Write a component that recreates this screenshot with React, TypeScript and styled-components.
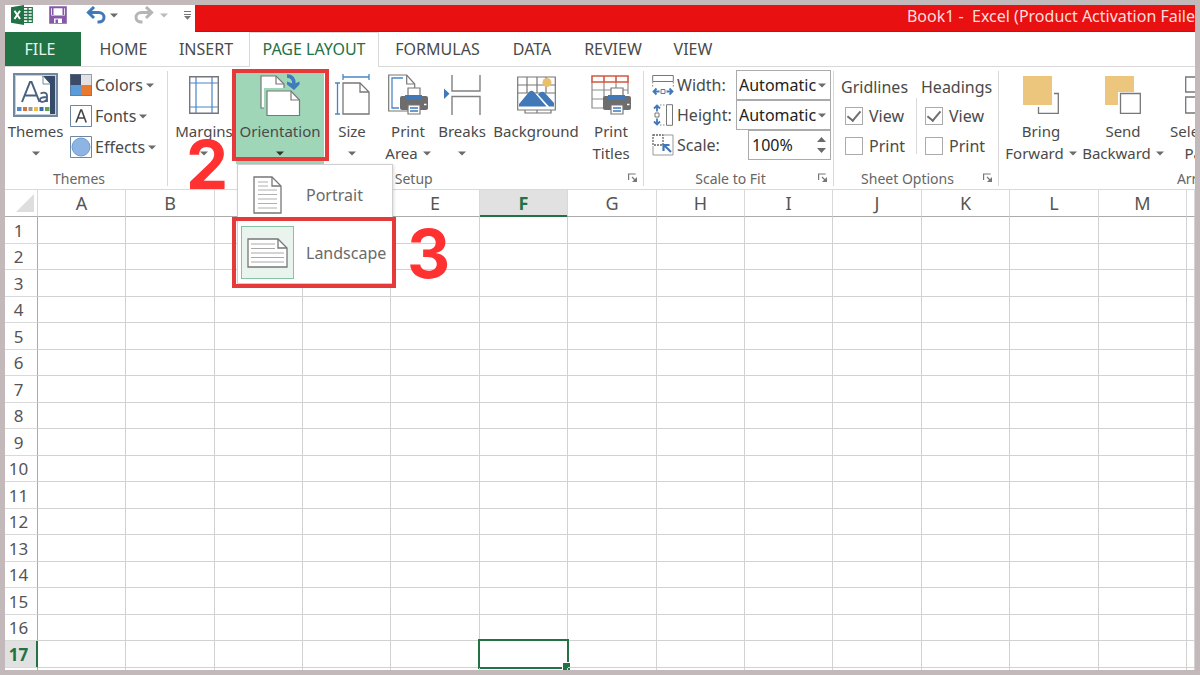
import React from "react";
import styled, { createGlobalStyle, css } from "styled-components";

const green = "#217346";
const ink = "#4a4a4a";
const line = "#d9d9d9";
const mark = "#e5393a";

const GlobalStyle = createGlobalStyle`
  * { box-sizing: border-box; }
  body { margin: 0; background: #c3b9bb; }
  body, button, input, select {
    font-family: "Noto Sans", "Open Sans", sans-serif;
    font-size: 16px;
    color: ${ink};
  }
  button { border: 0; background: none; padding: 0; }
  svg { display: block; flex: none; }
`;

const Frame = styled.main`
  height: 100vh;
  border: 5px solid #c3b9bb;
  background: #fff;
  overflow: hidden;
  display: flex;
  flex-direction: column;
`;

const TitleBar = styled.header`
  display: flex;
  height: 27px;
  flex: none;
`;

const QuickAccess = styled.div`
  display: flex;
  align-items: flex-start;
  width: 190px;
  padding-left: 6px;
`;

const QuickButton = styled.button<{ $w: number }>`
  width: ${(p) => p.$w}px;
  height: 20px;
  display: flex;
  align-items: center;
`;

const WindowTitle = styled.h1`
  flex: 1;
  margin: 0;
  background: #e81010;
  border-bottom: 1px solid #c01414;
  color: #ffdede;
  font-size: 16px;
  font-weight: 400;
  line-height: 23px;
  text-align: right;
  white-space: pre;
`;

const TabRow = styled.nav`
  display: flex;
  height: 35px;
  flex: none;
  border-bottom: 1px solid ${line};
`;

const FileTab = styled.button`
  width: 76px;
  height: 34px;
  margin-right: 3px;
  padding: 0 6px 1px 0;
  background: ${green};
  color: #e6f3ea;
`;

const Tab = styled.button<{ $w: number; $active?: boolean }>`
  width: ${(p) => p.$w}px;
  height: 35px;
  padding-bottom: 2px;
  white-space: nowrap;
  ${(p) =>
    p.$active &&
    css`
      color: ${green};
      background: #fff;
      border: 1px solid ${line};
      border-bottom: 0;
    `}
`;

const Ribbon = styled.section`
  display: flex;
  height: 123px;
  flex: none;
  border-bottom: 1px solid ${line};
  position: relative;
  z-index: 2;
`;

const Group = styled.div<{ $w: number; $pad?: number }>`
  width: ${(p) => p.$w}px;
  flex: none;
  display: flex;
  flex-direction: column;
  padding-top: 4px;
  padding-left: ${(p) => p.$pad ?? 0}px;
  background: linear-gradient(${line}, ${line}) right 4px / 1px 115px no-repeat;
`;

const GroupBody = styled.div`
  display: flex;
  height: 93px;
`;

const GroupFooter = styled.div`
  display: flex;
  align-items: center;
  height: 25px;
  padding: 3px 6px 0 0;
`;

const GroupName = styled.span`
  flex: 1;
  padding-right: 9px;
  text-align: center;
  font-size: 14px;
  color: #666;
`;

const Launcher = styled.button`
  width: 10px;
  height: 10px;
`;

const Tool = styled.button<{ $w: number; $on?: boolean }>`
  width: ${(p) => p.$w}px;
  height: 93px;
  flex: none;
  display: flex;
  flex-direction: column;
  align-items: center;
  font-size: 15px;
  background: ${(p) => (p.$on ? "#9fd6b7" : "transparent")};
`;

const ToolIcon = styled.span`
  height: 49px;
  padding-bottom: 2px;
  display: flex;
  align-items: center;
`;

const ToolLine = styled.span`
  height: 22px;
  display: flex;
  align-items: center;
  gap: 5px;
  line-height: 22px;
  white-space: nowrap;
`;

const SmallTools = styled.div`
  display: flex;
  flex-direction: column;
  gap: 9px;
  padding: 3px 0 0 4px;
`;

const SmallTool = styled.button`
  display: flex;
  align-items: center;
  gap: 3px;
  height: 22px;
`;

const OrientationArea = styled.div`
  position: relative;
`;

const Highlight = styled.div<{ $inset: string }>`
  position: absolute;
  inset: ${(p) => p.$inset};
  border: 4px solid ${mark};
  pointer-events: none;
`;

const Step = styled.span<{ $x: number; $y: number }>`
  position: absolute;
  left: ${(p) => p.$x}px;
  top: ${(p) => p.$y}px;
  font-family: Inter, sans-serif;
  font-size: 67px;
  line-height: 50px;
  font-weight: 700;
  color: #ff3131;
  pointer-events: none;
`;

const Menu = styled.div`
  position: absolute;
  left: 1px;
  top: 93px;
  width: 156px;
  height: 120px;
  padding: 3px 0 0 3px;
  background: #fff;
  border: 1px solid #cfcfcf;
  box-shadow: 1px 1px 3px rgba(0, 0, 0, 0.15);
`;

const MenuItem = styled.button`
  display: flex;
  align-items: center;
  gap: 12px;
  width: 100%;
  height: 53px;
  color: #6a6a6a;
  & + & { margin-top: 5px; }
`;

const MenuIcon = styled.span<{ $on?: boolean }>`
  width: 53px;
  height: 53px;
  display: flex;
  align-items: center;
  justify-content: center;
  border: 1px solid ${(p) => (p.$on ? "#86c3a1" : "transparent")};
  background: ${(p) => (p.$on ? "#e9f4ee" : "transparent")};
`;

const ScaleRows = styled.div`
  flex: 1;
  margin-top: -1px;
  padding-right: 3px;
`;

const ScaleRow = styled.div`
  display: flex;
  align-items: center;
  height: 30px;
`;

const ScaleLabel = styled.label`
  flex: 1;
  padding: 0 0 1px 3px;
`;

const Field = styled.div<{ $w: number }>`
  width: ${(p) => p.$w}px;
  height: 30px;
  display: flex;
  align-items: center;
  border: 1px solid #ababab;
  padding-right: 4px;
`;

const SelectBox = styled.select`
  appearance: none;
  flex: 1;
  min-width: 0;
  border: 0;
  padding: 0 0 1px 2px;
  background: none;
  color: #222;
`;

const PercentBox = styled.input`
  flex: 1;
  min-width: 0;
  border: 0;
  padding: 0 0 1px 3px;
  background: none;
  color: #222;
`;

const CheckColumn = styled.fieldset<{ $w: number; $rule?: boolean }>`
  width: ${(p) => p.$w}px;
  height: 80px;
  margin: 3px 0 0;
  padding: 0;
  border: 0;
  background: ${(p) =>
    p.$rule ? `linear-gradient(${line}, ${line}) right 4px top 10px / 1px 62px no-repeat` : "none"};
`;

const CheckTitle = styled.legend`
  padding: 0;
  height: 27px;
  line-height: 26px;
`;

const CheckLabel = styled.label`
  display: flex;
  align-items: center;
  gap: 6px;
  height: 30px;
  padding-left: 4px;
`;

const Check = styled.input`
  appearance: none;
  width: 18px;
  height: 18px;
  margin: 0;
  border: 1px solid #ababab;
  display: grid;
  place-items: center;
  &:checked::after {
    content: "";
    width: 6px;
    height: 11px;
    margin-top: -3px;
    border: solid #6e6e6e;
    border-width: 0 2px 2px 0;
    transform: rotate(40deg);
  }
`;

const SheetArea = styled.section`
  flex: 1;
  min-height: 0;
  overflow: hidden;
`;

const Sheet = styled.table`
  width: 100%;
  table-layout: fixed;
  border-collapse: separate;
  border-spacing: 0;
`;

const Corner = styled.th`
  height: 27px;
  padding: 0 3px 0 11px;
  border-right: 1px solid ${line};
  border-bottom: 1px solid #ababab;
`;

const ColHead = styled.th<{ $on?: boolean }>`
  height: 27px;
  padding: 0;
  font-size: 18px;
  font-weight: ${(p) => (p.$on ? 700 : 400)};
  line-height: 24px;
  color: ${(p) => (p.$on ? green : "#555")};
  background: ${(p) => (p.$on ? "#e1e1e1" : "#fff")};
  border-right: 1px solid ${line};
  border-bottom: 1px solid ${(p) => (p.$on ? green : "#ababab")};
  box-shadow: ${(p) => (p.$on ? `inset 0 -1px ${green}` : "none")};
`;

const Row = styled.tr`
  height: 26px;
  &:nth-child(odd) { height: 27px; }
`;

const RowHead = styled.th<{ $on?: boolean }>`
  padding: 1px 5px 0 0;
  font-size: 17px;
  font-weight: ${(p) => (p.$on ? 700 : 400)};
  line-height: 24px;
  color: ${(p) => (p.$on ? green : "#555")};
  background: ${(p) => (p.$on ? "#e1e1e1" : "#fff")};
  border-right: 1px solid ${(p) => (p.$on ? green : "#ababab")};
  border-bottom: 1px solid ${line};
  box-shadow: ${(p) => (p.$on ? `inset -1px 0 ${green}` : "none")};
`;

const Cell = styled.td`
  position: relative;
  padding: 0;
  border-right: 1px solid #d2d2d2;
  border-bottom: 1px solid #d2d2d2;
`;

const Selection = styled.div`
  position: absolute;
  inset: -2px;
  border: 2px solid ${green};
  &::after {
    content: "";
    position: absolute;
    right: -3px;
    bottom: -3px;
    width: 7px;
    height: 7px;
    background: ${green};
    border: solid #fff;
    border-width: 1px 0 0 1px;
  }
`;

const Arrow = ({ color = "#6b6b6b" }: { color?: string }) => (
  <svg width="8" height="5" viewBox="0 0 8 5"><path d="M0 0.5h8L4 4.5z" fill={color} /></svg>
);

const ExcelLogo = () => (
  <svg width="22" height="20" viewBox="0 0 22 20">
    <path d="M12 2.5h9.3v15H12z" fill="#fff" stroke={green} strokeWidth="1.2" />
    <path d="M13 5.5h8M13 8.5h8M13 11.5h8M13 14.5h8M17 3v14" stroke={green} strokeWidth="1.3" />
    <path d="M0 2.2 13 0v20L0 17.8z" fill={green} />
    <path d="M3.5 5.8 9 14M9 5.8 3.5 14" stroke="#fff" strokeWidth="2" />
  </svg>
);

const SaveIcon = () => (
  <svg width="18" height="18" viewBox="0 0 18 18">
    <path d="M1.2 1.2h15.6v15.6H1.2z" fill="#fff" stroke="#8659a8" strokeWidth="2" />
    <path d="M3 1h1.500v8H3zM13.500 1H15v8h-1.500z" fill="#8659a8" />
    <path d="M1 9.500h16V17H1z" fill="#8659a8" />
    <path d="M5 12.500h8V17H5z" fill="#fff" />
    <path d="M6.500 13.500h2.500V17H6.500z" fill="#8659a8" />
  </svg>
);

const UndoIcon = ({ color, flip }: { color: string; flip?: boolean }) => (
  <svg width="20" height="18" viewBox="0 0 20 18">
    <g transform={flip ? "translate(20 0) scale(-1 1)" : undefined} fill="none" stroke={color}>
      <path d="M2 6.5h10.5c3.2 0 5.500 1.900 5.500 4.800s-2.200 4.700-5.500 4.700h-1" strokeWidth="3" />
      <path d="M8 1 2.400 6.500 8 12" strokeWidth="3" />
    </g>
  </svg>
);

const CustomizeIcon = () => (
  <svg width="7" height="9" viewBox="0 0 7 9"><path d="M0 .5h7M0 3.500h7" stroke="#777" /><path d="M0 5h7L3.500 8.700z" fill="#777" /></svg>
);

const ThemesIcon = () => (
  <svg width="45" height="44" viewBox="0 0 45 44">
    <path d="M1 1h43v42H1z" fill="#fff" stroke="#7288a0" strokeWidth="2" />
    <path d="M2.500 2.500h40v39h-40z" fill="#fff" stroke="#c5d0db" />
    <path d="M29 3h13v38h-5V11z" fill="#364b69" />
    <path d="M30 3v8h7" fill="#fff" stroke="#7288a0" />
    <path d="M9 29 17 9h1.500l8 20M12 22.500h11.500" fill="none" stroke="#47617f" strokeWidth="2" />
    <path d="M27.500 20.500c4-2 6.500-.5 6.500 2V29m0-5c-4 0-7 .5-7 2.800 0 3 5 2.700 7-.5" fill="none" stroke="#47617f" strokeWidth="1.800" />
    <path d="M4 34h4.500v4H4z" fill="#4f8bc9" /><path d="M10 34h4v4h-4z" fill="#d9713a" />
    <path d="M15.500 34h4v4h-4z" fill="#999" /><path d="M21 34h4v4h-4z" fill="#edbd3d" />
    <path d="M26.500 34h4v4h-4z" fill="#3c6cae" /><path d="M32 34h4.500v4H32z" fill="#62a44b" />
  </svg>
);

const ColorsIcon = () => (
  <svg width="22" height="22" viewBox="0 0 22 22">
    <path d="M0 0h11v11H0z" fill="#3c4c66" /><path d="M11 0h11v11H11z" fill="#e3e1e1" />
    <path d="M0 11h11v11H0z" fill="#5a9bd8" /><path d="M11 11h11v11H11z" fill="#e8792e" />
    <path d="M.5.5h21v21H.5z" fill="none" stroke="#5f7188" strokeOpacity=".6" />
  </svg>
);

const FontsIcon = () => (
  <svg width="22" height="22" viewBox="0 0 22 22">
    <path d="M.5.5h21v21H.5z" fill="#fff" stroke="#6f86a0" />
    <path d="M6 17.500 10.800 5h.8l4.600 12.500M7.500 13h7" fill="none" stroke="#444" strokeWidth="1.600" />
  </svg>
);

const EffectsIcon = () => (
  <svg width="22" height="22" viewBox="0 0 22 22">
    <path d="M.5.5h21v21H.5z" fill="#fff" stroke="#6f86a0" />
    <circle cx="11" cy="11" r="9" fill="#8db4e2" stroke="#6d9bd0" />
  </svg>
);

const MarginsIcon = () => (
  <svg width="30" height="38" viewBox="0 0 30 38">
    <path d="M.7.7h28.600v36.600H.7z" fill="#fff" stroke="#767676" strokeWidth="1.400" />
    <path d="M7 1v36M23 1v36M1 7h28M1 31h28" stroke="#4a86c5" strokeWidth="1.200" />
  </svg>
);

const OrientationIcon = () => (
  <svg width="42" height="44" viewBox="0 0 42 44">
    <path d="M2 3h15l8 8v24H2z" fill="#fff" stroke="#777" strokeWidth="1.200" />
    <path d="M17 3v8h8" fill="none" stroke="#777" strokeWidth="1.200" />
    <path d="M5 15h30v29H5z" fill="#9fd6b7" />
    <path d="M8 18h24l8.500 9v15.500H8z" fill="#fff" stroke="#777" strokeWidth="1.200" />
    <path d="M32 18v9h8.500" fill="none" stroke="#777" strokeWidth="1.200" />
    <path d="M28 3c4.500 0 7 3 7 8" fill="none" stroke="#3e7cbc" strokeWidth="3.500" />
    <path d="m28 8.500 7 2.500 5.500-2.500v3L35 17l-7-5.500z" fill="#3e7cbc" />
  </svg>
);

const SizeIcon = () => (
  <svg width="35" height="42" viewBox="0 0 35 42">
    <path d="M8 3h26M8 0v6M34 0v6M2.500 9v31M0 9h5M0 40h5" stroke="#4a86c5" strokeWidth="1.300" />
    <path d="M8 9h17l9 9v22H8z" fill="#fff" stroke="#777" strokeWidth="1.300" />
    <path d="M25 9v9h9" fill="none" stroke="#777" strokeWidth="1.300" />
  </svg>
);

const Printer = () => (
  <g>
    <path d="M21 14h12v10H21z" fill="#fff" stroke="#777" strokeWidth="1.200" />
    <rect x="13" y="22" width="28" height="14" rx="2" fill="#6d6d6d" />
    <path d="M18 21h17v5H18z" fill="#4078b8" />
    <path d="M21 31h12v9H21z" fill="#fff" stroke="#777" strokeWidth="1.200" />
    <path d="M23 34h8M23 37h8" stroke="#4078b8" strokeWidth="1.300" />
    <path d="M37 30.500h2.500" stroke="#fff" strokeWidth="1.500" />
  </g>
);

const PrintAreaIcon = () => (
  <svg width="42" height="42" viewBox="0 0 42 42">
    <path d="M1.700 1h18l8 9v27h-26z" fill="#fff" stroke="#777" strokeWidth="1.200" />
    <path d="M19.700 1v9h8" fill="none" stroke="#777" strokeWidth="1.200" />
    <path d="M16 4H5v30h7" fill="none" stroke="#4a86c5" strokeWidth="1.300" />
    <Printer />
  </svg>
);

const BreaksIcon = () => (
  <svg width="37" height="40" viewBox="0 0 37 40">
    <path d="M8 0v16h28V0M8 40V21.500h28V40" fill="none" stroke="#808080" strokeWidth="1.400" />
    <path d="M0 13.500 5.500 18.700 0 24z" fill="#4078b8" />
  </svg>
);

const BackgroundIcon = () => (
  <svg width="39" height="38" viewBox="0 0 39 38">
    <path d="M.7 1h37.600v33H.7zM.7 9h37.600M.7 17h37.600M10 1v16M20 1v16M29 1v16M8 34v3h26v-3M20 34v3" fill="#fff" stroke="#777" strokeWidth="1.200" />
    <circle cx="30" cy="6.500" r="4.500" fill="#eabf6c" />
    <path d="M2 30.500V28L12 16q2.500-2.500 5 0l12.500 14.500zM21 18.500l2-2q2.500-1.800 5 .5l9 10v3.500h-5z" fill="#4078b8" />
  </svg>
);

const PrintTitlesIcon = () => (
  <svg width="42" height="42" viewBox="0 0 42 42">
    <path d="M2 8v26h12M2 16h36M2 25h12M14 8v16M26 8v8M38 8v12" fill="none" stroke="#8d8d8d" strokeWidth="1.200" />
    <path d="M2 2h36v6H2zM14 2v6M26 2v6" fill="#fff" stroke="#d4573c" strokeWidth="1.600" />
    <Printer />
  </svg>
);

const LayersIcon = ({ back }: { back?: boolean }) => (
  <svg width="36" height="38" viewBox="0 0 36 38">
    {back && <path d="M0 0h29v29H0z" fill="#ecc67c" />}
    {back && <path d="M13 16h23v22H13z" fill="#fff" />}
    <path d="M15.500 17.500h19.800v19.800H15.500z" fill="#fff" stroke="#777" strokeWidth="1.300" />
    {!back && <path d="M0 0h31v31H0z" fill="#fff" />}
    {!back && <path d="M0 0h29v29H0z" fill="#ecc67c" />}
  </svg>
);

const PaneIcon = () => (
  <svg width="34" height="38" viewBox="0 0 34 38">
    <path d="M.7 1h16v15H.7zM.7 21h16v16H.7z" fill="#fff" stroke="#777" strokeWidth="1.300" />
  </svg>
);

const PortraitIcon = () => (
  <svg width="29" height="38" viewBox="0 0 29 38">
    <path d="M1 1h18l9 9v27H1z" fill="#fff" stroke="#777" strokeWidth="1.300" />
    <path d="M19 1v9h9" fill="none" stroke="#777" strokeWidth="1.300" />
    <path d="M5 6h10M5 10h10M5 14h19M5 18.500h19M5 23h19M5 27.500h19M5 32h19" stroke="#b0b0b0" strokeWidth="1.200" />
  </svg>
);

const LandscapeIcon = () => (
  <svg width="41" height="30" viewBox="0 0 41 30">
    <path d="M1 1h30l9 9v19H1z" fill="#fff" stroke="#777" strokeWidth="1.300" />
    <path d="M31 1v9h9" fill="none" stroke="#777" strokeWidth="1.300" />
    <path d="M4 6h24M4 10.500h24M4 15h33M4 19.500h33M4 24h33" stroke="#aaa" strokeWidth="1.200" />
  </svg>
);

const WidthIcon = () => (
  <svg width="22" height="22" viewBox="0 0 22 22">
    <path d="M.7 1.500h20.600v6H.7z" fill="#fff" stroke="#777" />
    <path d="M.7 8v5M21.300 8v5" stroke="#888" strokeDasharray="1.500 1.500" />
    <path d="M9 15.500h4v4H9z" fill="none" stroke="#777" />
    <path d="M7.500 17.500H2M4.500 14.500l-3 3 3 3M14.500 17.500H20M17.500 14.500l3 3-3 3" fill="none" stroke="#4078b8" strokeWidth="1.800" />
  </svg>
);

const HeightIcon = () => (
  <svg width="22" height="22" viewBox="0 0 22 22">
    <path d="M14.500.7h6v20.600h-6z" fill="#fff" stroke="#777" />
    <path d="M8 1h6M8 21h6" stroke="#888" strokeDasharray="1.500 1.500" />
    <path d="M3 9h4v4H3z" fill="none" stroke="#777" />
    <path d="M5 7.500V2M2 4.500l3-3 3 3M5 14.500V20M2 17.500l3 3 3-3" fill="none" stroke="#4078b8" strokeWidth="1.800" />
  </svg>
);

const ScaleIcon = () => (
  <svg width="22" height="22" viewBox="0 0 22 22">
    <path d="M12 1h9v20H1v-9" fill="none" stroke="#999" />
    <path d="M1 1h10v10H1z" fill="#fff" stroke="#666" strokeWidth="1.300" strokeDasharray="2 1" />
    <path d="m12 11 7 7M11.500 17v-6h6" fill="none" stroke="#4078b8" strokeWidth="2.200" />
  </svg>
);

const Spinner = () => (
  <svg width="9" height="16" viewBox="0 0 9 16"><path d="M0 5h9L4.500 0zM0 11h9l-4.500 5z" fill="#6b6b6b" /></svg>
);

const LauncherIcon = () => (
  <svg width="10" height="10" viewBox="0 0 10 10">
    <path d="M.6 7V1h7M4 4l4 4" fill="none" stroke="#777" strokeWidth="1.200" /><path d="M9 4v5H4z" fill="#777" />
  </svg>
);

const CornerIcon = () => (
  <svg width="18" height="18" viewBox="0 0 18 18"><path d="M18 0v18H0z" fill="#dedede" /></svg>
);

type ToolProps = { w: number; icon: React.ReactNode; label: string; second?: string; menu?: boolean; on?: boolean };

const RibbonTool = ({ w, icon, label, second, menu, on }: ToolProps) => (
  <Tool $w={w} $on={on}>
    <ToolIcon>{icon}</ToolIcon>
    <ToolLine>{label}</ToolLine>
    <ToolLine>
      {second}
      {menu && <Arrow color={on ? "#333" : undefined} />}
    </ToolLine>
  </Tool>
);

const Footer = ({ name, launcher }: { name: string; launcher?: boolean }) => (
  <GroupFooter>
    <GroupName>{name}</GroupName>
    {launcher && <Launcher aria-label={`${name} settings`}><LauncherIcon /></Launcher>}
  </GroupFooter>
);

const tabs = [
  { name: "HOME", w: 79 },
  { name: "INSERT", w: 86 },
  { name: "PAGE LAYOUT", w: 130, active: true },
  { name: "FORMULAS", w: 117 },
  { name: "DATA", w: 72 },
  { name: "REVIEW", w: 90 },
  { name: "VIEW", w: 70 },
];

const smallTools = [
  { name: "Colors", icon: <ColorsIcon /> },
  { name: "Fonts", icon: <FontsIcon /> },
  { name: "Effects", icon: <EffectsIcon /> },
];

const checkColumns = [
  { name: "Gridlines", w: 80, rule: true },
  { name: "Headings", w: 76, rule: false },
];

const columns = "ABCDEFGHIJKLMN".split("");
const columnWidths = [88, 89, 88, 88, 89];
const rows = Array.from({ length: 40 }, (_, i) => i + 1);

export default function App() {
  return (
    <Frame>
      <GlobalStyle />
      <TitleBar>
        <QuickAccess>
          <QuickButton $w={38} aria-label="Excel"><ExcelLogo /></QuickButton>
          <QuickButton $w={37} aria-label="Save"><SaveIcon /></QuickButton>
          <QuickButton $w={24} aria-label="Undo"><UndoIcon color="#4078b8" /></QuickButton>
          <QuickButton $w={24} aria-label="Undo history"><Arrow /></QuickButton>
          <QuickButton $w={26} aria-label="Redo"><UndoIcon color="#b5b5b5" flip /></QuickButton>
          <QuickButton $w={24} aria-label="Redo history"><Arrow color="#bbb" /></QuickButton>
          <QuickButton $w={8} aria-label="Customize toolbar"><CustomizeIcon /></QuickButton>
        </QuickAccess>
        <WindowTitle>{"Book1 -  Excel (Product Activation Faile"}</WindowTitle>
      </TitleBar>

      <TabRow>
        <FileTab>FILE</FileTab>
        {tabs.map((t) => (
          <Tab key={t.name} $w={t.w} $active={t.active}>{t.name}</Tab>
        ))}
      </TabRow>

      <Ribbon>
        <Group $w={163}>
          <GroupBody>
            <RibbonTool w={61} icon={<ThemesIcon />} label="Themes" menu />
            <SmallTools>
              {smallTools.map((t) => (
                <SmallTool key={t.name}>
                  {t.icon}
                  <span>{t.name}</span>
                  <Arrow />
                </SmallTool>
              ))}
            </SmallTools>
          </GroupBody>
          <Footer name="Themes" />
        </Group>

        <Group $w={476} $pad={4}>
          <GroupBody>
            <RibbonTool w={64} icon={<MarginsIcon />} label="Margins" menu />
            <OrientationArea>
              <RibbonTool w={88} icon={<OrientationIcon />} label="Orientation" menu on />
              <Menu>
                <MenuItem><MenuIcon><PortraitIcon /></MenuIcon>Portrait</MenuItem>
                <MenuItem><MenuIcon $on><LandscapeIcon /></MenuIcon>Landscape</MenuItem>
                <Highlight $inset="52px -4px -5px -6px" />
                <Step $x={169} $y={64}>3</Step>
              </Menu>
              <Highlight $inset="-2px -5px 3px -4px" />
              <Step $x={-50} $y={69}>2</Step>
            </OrientationArea>
            <RibbonTool w={56} icon={<SizeIcon />} label="Size" menu />
            <RibbonTool w={56} icon={<PrintAreaIcon />} label="Print" second="Area" menu />
            <RibbonTool w={52} icon={<BreaksIcon />} label="Breaks" menu />
            <RibbonTool w={96} icon={<BackgroundIcon />} label="Background" />
            <RibbonTool w={54} icon={<PrintTitlesIcon />} label="Print" second="Titles" />
          </GroupBody>
          <Footer name="Page Setup" launcher />
        </Group>

        <Group $w={190} $pad={8}>
          <GroupBody>
            <ScaleRows>
              <ScaleRow>
                <WidthIcon />
                <ScaleLabel htmlFor="fit-width">Width:</ScaleLabel>
                <Field $w={95}>
                  <SelectBox id="fit-width"><option>Automatic</option></SelectBox>
                  <Arrow />
                </Field>
              </ScaleRow>
              <ScaleRow>
                <HeightIcon />
                <ScaleLabel htmlFor="fit-height">Height:</ScaleLabel>
                <Field $w={95}>
                  <SelectBox id="fit-height"><option>Automatic</option></SelectBox>
                  <Arrow />
                </Field>
              </ScaleRow>
              <ScaleRow>
                <ScaleIcon />
                <ScaleLabel htmlFor="fit-scale">Scale:</ScaleLabel>
                <Field $w={83}>
                  <PercentBox id="fit-scale" defaultValue="100%" />
                  <Spinner />
                </Field>
              </ScaleRow>
            </ScaleRows>
          </GroupBody>
          <Footer name="Scale to Fit" launcher />
        </Group>

        <Group $w={165} $pad={7}>
          <GroupBody>
            {checkColumns.map((c) => (
              <CheckColumn key={c.name} $w={c.w} $rule={c.rule}>
                <CheckTitle>{c.name}</CheckTitle>
                <CheckLabel><Check type="checkbox" defaultChecked />View</CheckLabel>
                <CheckLabel><Check type="checkbox" />Print</CheckLabel>
              </CheckColumn>
            ))}
          </GroupBody>
          <Footer name="Sheet Options" launcher />
        </Group>

        <Group $w={422} $pad={2}>
          <GroupBody>
            <RibbonTool w={80} icon={<LayersIcon />} label="Bring" second="Forward" menu />
            <RibbonTool w={84} icon={<LayersIcon back />} label="Send" second="Backward" menu />
            <RibbonTool w={74} icon={<PaneIcon />} label="Selection" second="Pane" />
          </GroupBody>
          <Footer name="Arrange" />
        </Group>
      </Ribbon>

      <SheetArea>
        <Sheet>
          <colgroup>
            <col width={33} />
            {columns.map((c, i) => (
              <col key={c} width={i < columns.length - 1 ? columnWidths[i % 5] : undefined} />
            ))}
          </colgroup>
          <thead>
            <tr>
              <Corner aria-label="Select all"><CornerIcon /></Corner>
              {columns.map((c, i) => (
                <ColHead key={c} $on={c === "F"}>{i < columns.length - 1 ? c : ""}</ColHead>
              ))}
            </tr>
          </thead>
          <tbody>
            {rows.map((r) => (
              <Row key={r}>
                <RowHead $on={r === 17}>{r}</RowHead>
                {columns.map((c) => (
                  <Cell key={c}>{c === "F" && r === 17 && <Selection />}</Cell>
                ))}
              </Row>
            ))}
          </tbody>
        </Sheet>
      </SheetArea>
    </Frame>
  );
}
